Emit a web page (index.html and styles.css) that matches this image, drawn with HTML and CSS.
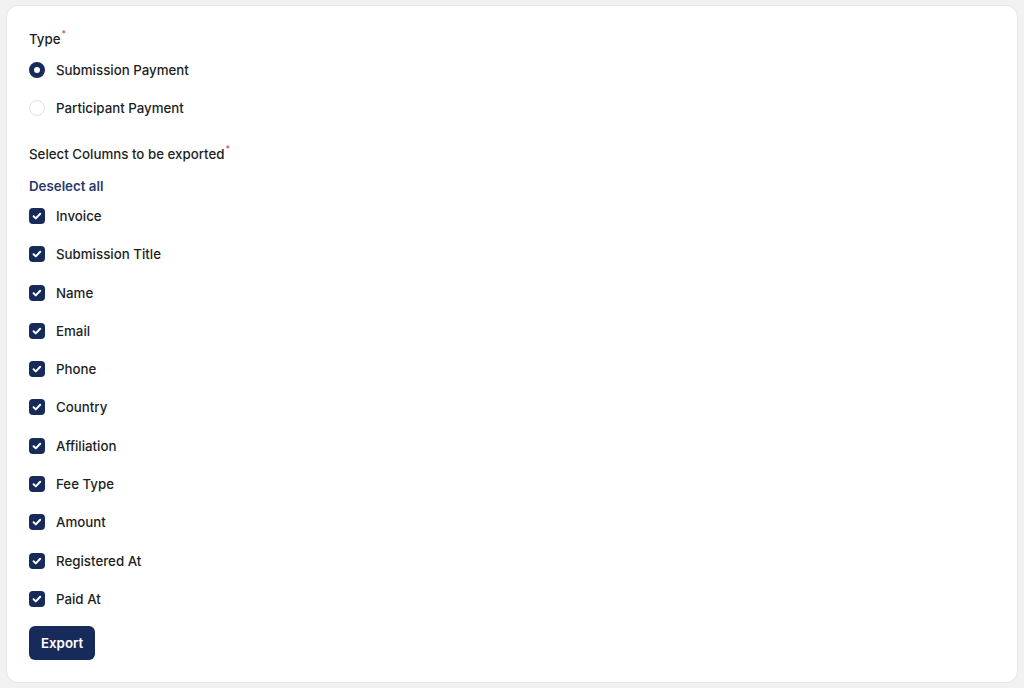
FILE: index.html
```html
<!DOCTYPE html>
<html>
<head>
<meta charset="utf-8">
<link rel="stylesheet" href="styles.css">
</head>
<body>
<div class="card">
  <div class="label">Type<span class="req">*</span></div>
  <div class="radios">
    <label class="opt"><span class="radio checked"></span>Submission Payment</label>
    <label class="opt"><span class="radio"></span>Participant Payment</label>
  </div>
  <div class="label label-cols">Select Columns to be exported<span class="req">*</span></div>
  <div class="deselect">Deselect all</div>
  <div class="checks">
    <label class="opt"><span class="check"><svg viewBox="0 0 16 16"><path d="M4.6 8.2l2.2 2.2 4.4-4.6"/></svg></span>Invoice</label>
    <label class="opt"><span class="check"><svg viewBox="0 0 16 16"><path d="M4.6 8.2l2.2 2.2 4.4-4.6"/></svg></span>Submission Title</label>
    <label class="opt"><span class="check"><svg viewBox="0 0 16 16"><path d="M4.6 8.2l2.2 2.2 4.4-4.6"/></svg></span>Name</label>
    <label class="opt"><span class="check"><svg viewBox="0 0 16 16"><path d="M4.6 8.2l2.2 2.2 4.4-4.6"/></svg></span>Email</label>
    <label class="opt"><span class="check"><svg viewBox="0 0 16 16"><path d="M4.6 8.2l2.2 2.2 4.4-4.6"/></svg></span>Phone</label>
    <label class="opt"><span class="check"><svg viewBox="0 0 16 16"><path d="M4.6 8.2l2.2 2.2 4.4-4.6"/></svg></span>Country</label>
    <label class="opt"><span class="check"><svg viewBox="0 0 16 16"><path d="M4.6 8.2l2.2 2.2 4.4-4.6"/></svg></span>Affiliation</label>
    <label class="opt"><span class="check"><svg viewBox="0 0 16 16"><path d="M4.6 8.2l2.2 2.2 4.4-4.6"/></svg></span>Fee Type</label>
    <label class="opt"><span class="check"><svg viewBox="0 0 16 16"><path d="M4.6 8.2l2.2 2.2 4.4-4.6"/></svg></span>Amount</label>
    <label class="opt"><span class="check"><svg viewBox="0 0 16 16"><path d="M4.6 8.2l2.2 2.2 4.4-4.6"/></svg></span>Registered At</label>
    <label class="opt"><span class="check"><svg viewBox="0 0 16 16"><path d="M4.6 8.2l2.2 2.2 4.4-4.6"/></svg></span>Paid At</label>
  </div>
  <button class="btn">Export</button>
</div>
</body>
</html>
```
FILE: styles.css
```css
* { box-sizing: border-box; }
html, body { margin: 0; }
body {
  background: #f2f2f2;
  padding: 5px 6px 5px 6px;
  font-family: Inter, "Noto Sans", sans-serif;
  font-size: 13.3px;
  color: #1c1c1c;
  height: 688px;
}
.card {
  background: #fff;
  border: 1px solid #e6e6e6;
  border-radius: 12px;
  height: 678px;
  padding: 18px 22px 0 22px;
  display: flex;
  flex-direction: column;
  align-items: flex-start;
}
.label {
  font-weight: 500;
  line-height: 20px;
  color: #1e1e1e;
}
.req {
  color: #e5484d;
  font-size: 9px;
  vertical-align: 7px;
  margin-left: 1px;
}
.radios {
  margin-top: 11px;
  display: flex;
  flex-direction: column;
  gap: 18px;
}
.opt {
  display: flex;
  align-items: center;
  gap: 11px;
  line-height: 20px;
  font-weight: 500;
  color: #1e1e1e;
}
.radio {
  width: 16px;
  height: 16px;
  border-radius: 50%;
  border: 1px solid #e3e3e3;
  background: #fff;
  flex: none;
}
.radio.checked {
  border: 5px solid #172b5a;
}
.label-cols {
  margin-top: 21px;
}
.deselect {
  margin-top: 12px;
  line-height: 20px;
  font-weight: 600;
  color: #293a6b;
}
.checks {
  margin-top: 10px;
  display: flex;
  flex-direction: column;
  gap: 18.3px;
}
.check {
  width: 16px;
  height: 16px;
  border-radius: 4px;
  background: #172b5a;
  flex: none;
  display: flex;
}
.check svg {
  width: 16px;
  height: 16px;
  fill: none;
  stroke: #fff;
  stroke-width: 2;
  stroke-linecap: round;
  stroke-linejoin: round;
}
.btn {
  margin-top: 17px;
  background: #172b5a;
  color: #fff;
  border: none;
  border-radius: 6px;
  height: 34px;
  padding: 0 12px;
  font-family: inherit;
  font-size: 13.3px;
  font-weight: 600;
}
```
